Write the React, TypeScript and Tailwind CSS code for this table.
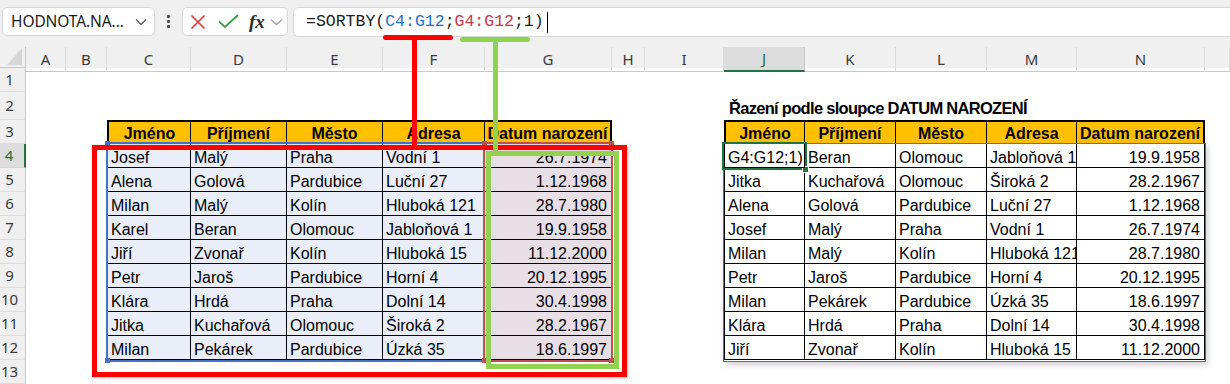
import React from "react";

const SHEET_COLS =
  "grid grid-cols-[40px_41px_84px_96px_96px_102px_127px_33px_79px_81px_91px_91px_90px_128px_1fr]";

const letters = ["A", "B", "C", "D", "E", "F", "G", "H", "I", "J", "K", "L", "M", "N", ""];

const heads = ["Jméno", "Příjmení", "Město", "Adresa", "Datum narození"];

const leftRows = [
  ["Josef", "Malý", "Praha", "Vodní 1", "26.7.1974"],
  ["Alena", "Golová", "Pardubice", "Luční 27", "1.12.1968"],
  ["Milan", "Malý", "Kolín", "Hluboká 121", "28.7.1980"],
  ["Karel", "Beran", "Olomouc", "Jabloňová 1", "19.9.1958"],
  ["Jiří", "Zvonař", "Kolín", "Hluboká 15", "11.12.2000"],
  ["Petr", "Jaroš", "Pardubice", "Horní 4", "20.12.1995"],
  ["Klára", "Hrdá", "Praha", "Dolní 14", "30.4.1998"],
  ["Jitka", "Kuchařová", "Olomouc", "Široká 2", "28.2.1967"],
  ["Milan", "Pekárek", "Pardubice", "Úzká 35", "18.6.1997"],
];

const rightRows = [
  ["G4:G12;1)", "Beran", "Olomouc", "Jabloňová 1", "19.9.1958"],
  ["Jitka", "Kuchařová", "Olomouc", "Široká 2", "28.2.1967"],
  ["Alena", "Golová", "Pardubice", "Luční 27", "1.12.1968"],
  ["Josef", "Malý", "Praha", "Vodní 1", "26.7.1974"],
  ["Milan", "Malý", "Kolín", "Hluboká 121", "28.7.1980"],
  ["Petr", "Jaroš", "Pardubice", "Horní 4", "20.12.1995"],
  ["Milan", "Pekárek", "Pardubice", "Úzká 35", "18.6.1997"],
  ["Klára", "Hrdá", "Praha", "Dolní 14", "30.4.1998"],
  ["Jiří", "Zvonař", "Kolín", "Hluboká 15", "11.12.2000"],
];

const rowHeaders = [
  { n: 1, h: "h-[24px]" },
  { n: 2, h: "h-[28px]" },
  { n: 3, h: "h-[24px]" },
  { n: 4, h: "h-[24px]" },
  { n: 5, h: "h-[24px]" },
  { n: 6, h: "h-[24px]" },
  { n: 7, h: "h-[24px]" },
  { n: 8, h: "h-[24px]" },
  { n: 9, h: "h-[24px]" },
  { n: 10, h: "h-[24px]" },
  { n: 11, h: "h-[24px]" },
  { n: 12, h: "h-[24px]" },
  { n: 13, h: "h-[24px]" },
];

function HeadRow() {
  return (
    <>
      {heads.map((t, i) => (
        <div
          key={t}
          className={
            "flex items-end justify-center overflow-hidden whitespace-nowrap bg-[#ffc000] font-bold text-[16px] leading-[18px] text-black border-t-2 border-b border-black " +
            (i === 0 ? "border-l-2 " : "") +
            (i === 4 ? "border-r-2" : "border-r")
          }
        >
          {t}
        </div>
      ))}
    </>
  );
}

function DataCell({
  text,
  col,
  bg,
  overflow,
}: {
  text: string;
  col: number;
  bg: string;
  overflow?: boolean;
}) {
  const isDate = col === 4;
  return (
    <div
      className={
        "flex items-end whitespace-nowrap text-[16px] leading-[18px] text-black border-r border-b border-black " +
        (overflow ? "overflow-visible relative z-10 " : "overflow-hidden ") +
        (col === 0 ? "border-l " : "") +
        (isDate ? "justify-end pr-[4px] " : "pl-[3px] ") +
        bg
      }
    >
      {text}
    </div>
  );
}

function Toolbar() {
  return (
    <div className="flex items-start h-[47px] bg-[#f0f0f0] pt-[7px] font-['Noto_Sans','Open_Sans',sans-serif]">
      <div className="ml-[2px] w-[153px] h-[29px] rounded-[5px] border border-[#d6d6d6] bg-white flex items-center pl-[8px] pr-[6px]">
        <span className="flex-1 text-[15.5px] text-[#1b1b1b] tracking-[-0.1px]">HODNOTA.NA...</span>
        <svg width="12" height="8" viewBox="0 0 12 8" className="mr-[1px]">
          <path d="M1 1.5 L6 6.5 L11 1.5" fill="none" stroke="#5a5a5a" strokeWidth="1.3" />
        </svg>
      </div>
      <div className="w-[27px] h-[29px] flex flex-col items-center justify-center gap-[2px]">
        <div className="w-[3px] h-[3px] bg-[#4a4a4a] rounded-[1px]" />
        <div className="w-[3px] h-[3px] bg-[#4a4a4a] rounded-[1px]" />
        <div className="w-[3px] h-[3px] bg-[#4a4a4a] rounded-[1px]" />
      </div>
      <div className="w-[106px] h-[29px] rounded-[5px] border border-[#d6d6d6] bg-white flex items-center pl-[6px]">
        <svg width="16" height="16" viewBox="0 0 16 16" className="ml-[1px]">
          <path d="M1.5 1.5 L14.5 14.5 M14.5 1.5 L1.5 14.5" stroke="#e5383d" strokeWidth="1.7" />
        </svg>
        <svg width="21" height="15" viewBox="0 0 21 15" className="ml-[12px]">
          <path d="M1 7.5 L7 13 L20 1" fill="none" stroke="#3b9c47" strokeWidth="1.8" />
        </svg>
        <span className="ml-[10px] font-['Liberation_Serif',serif] italic font-bold text-[19px] leading-none text-[#2b2b2b]">
          fx
        </span>
        <svg width="13" height="8" viewBox="0 0 13 8" className="ml-[5px]">
          <path d="M1 1.5 L6.5 6.5 L12 1.5" fill="none" stroke="#a3a3a3" strokeWidth="1.3" />
        </svg>
      </div>
      <div className="ml-[5px] flex-1 -mr-[8px] h-[30px] rounded-[5px] border border-[#d6d6d6] bg-white flex items-center pl-[12px]">
        <span className="font-['Liberation_Mono',monospace] text-[16.5px] text-[#1b1b1b] whitespace-pre">
          =SORTBY(<span className="text-[#1f6fc4]">C4:G12</span>;<span className="text-[#c23a4a]">G4:G12</span>;1)
        </span>
        <span className="ml-[3px] w-px h-[21px] bg-black" />
      </div>
    </div>
  );
}

function ColumnHeaders() {
  return (
    <div className="flex h-[21px] bg-[#f0f0f0] font-['Noto_Sans','Open_Sans',sans-serif]">
      <div className="w-[26px] h-full border-r border-b border-[#c8c8c8]">
        <svg width="25" height="20" viewBox="0 0 25 20">
          <polygon points="22,1 22,18 7,18" fill="#d6d6d6" />
        </svg>
      </div>
      <div className={SHEET_COLS + " flex-1"}>
        {letters.map((l, i) =>
          l === "J" ? (
            <div
              key={i}
              className="flex items-center justify-center text-[15px] text-[#217346] bg-[#dcdcdc] border-r border-[#c8c8c8] border-b-2 border-b-[#217346]"
            >
              {l}
            </div>
          ) : (
            <div
              key={i}
              className="flex items-center justify-center text-[15px] text-[#3a3a3a] border-r border-[#dcdcdc] border-b border-b-[#c8c8c8]"
            >
              {l}
            </div>
          )
        )}
      </div>
    </div>
  );
}

export default function App() {
  return (
    <div className="relative w-[1230px] h-[384px] overflow-hidden bg-white font-['Liberation_Sans',Arial,sans-serif]">
      <Toolbar />
      <ColumnHeaders />
      <div className="flex">
        <div className="flex flex-col w-[26px] bg-[#f0f0f0] font-['Noto_Sans','Open_Sans',sans-serif]">
          {rowHeaders.map((r) =>
            r.n === 4 ? (
              <div
                key={r.n}
                className={
                  r.h +
                  " flex items-center justify-center pr-[6px] text-[15px] text-[#217346] bg-[#dcdcdc] border-b border-[#d6d6d6] border-r-2 border-r-[#217346]"
                }
              >
                {r.n}
              </div>
            ) : (
              <div
                key={r.n}
                className={
                  r.h +
                  " flex items-center justify-center pr-[6px] text-[15px] text-[#3a3a3a] border-b border-[#dcdcdc] border-r border-r-[#c8c8c8]"
                }
              >
                {r.n}
              </div>
            )
          )}
        </div>
        <div
          className={
            SHEET_COLS +
            " flex-1 grid-rows-[24px_28px_24px_24px_24px_24px_24px_24px_24px_24px_24px_24px_24px]"
          }
        >
          {/* title */}
          <div className="col-start-10 col-end-16 row-start-2 flex items-end pl-[5px] pb-[3px] whitespace-nowrap font-bold text-[16.5px] leading-[18px] tracking-[-0.7px] text-black">
            Řazení podle sloupce DATUM NAROZENÍ
          </div>

          {/* left table */}
          <div className="col-start-3 col-end-8 row-start-3 row-end-13 grid grid-cols-[84px_96px_96px_102px_127px] grid-rows-[24px_24px_24px_24px_24px_24px_24px_24px_24px_24px]">
            <HeadRow />
            {leftRows.map((row, r) =>
              row.map((c, i) => (
                <DataCell
                  key={r + "-" + i}
                  text={c}
                  col={i}
                  bg={i === 4 ? "bg-[#e8dfe6]" : "bg-[#e9eef8]"}
                />
              ))
            )}
          </div>

          {/* right table */}
          <div className="col-start-10 col-end-15 row-start-3 row-end-13 grid grid-cols-[81px_91px_91px_90px_128px] grid-rows-[24px_24px_24px_24px_24px_24px_24px_24px_24px_24px]">
            <HeadRow />
            {rightRows.map((row, r) =>
              row.map((c, i) => (
                <DataCell
                  key={r + "-" + i}
                  text={c}
                  col={i}
                  bg="bg-white"
                  overflow={r === 0 && i === 0}
                />
              ))
            )}
          </div>
        </div>
      </div>

      {/* reference highlight C4:G12 */}
      <div className="absolute left-[106px] top-[142px] w-[507px] h-[220px] border-2 border-[#4472c4]" />
      <div className="absolute left-[105px] top-[141px] w-[5px] h-[5px] bg-[#4472c4]" />
      <div className="absolute left-[105px] top-[358px] w-[5px] h-[5px] bg-[#4472c4]" />
      {/* reference highlight G4:G12 */}
      <div className="absolute left-[483px] top-[142px] w-[130px] h-[220px] border-2 border-[#c0504d]" />
      <div className="absolute left-[482px] top-[141px] w-[5px] h-[5px] bg-[#c0504d]" />
      <div className="absolute left-[609px] top-[141px] w-[5px] h-[5px] bg-[#c0504d]" />
      <div className="absolute left-[482px] top-[358px] w-[5px] h-[5px] bg-[#c0504d]" />
      <div className="absolute left-[609px] top-[358px] w-[5px] h-[5px] bg-[#c0504d]" />

      {/* spill range border */}
      <div className="absolute left-[723px] top-[143px] w-[483px] h-[219px] border border-[#4472c4] shadow-[2px_3px_6px_rgba(0,0,0,0.18)]" />
      {/* active cell J4 */}
      <div className="absolute left-[722px] top-[142px] w-[85px] h-[28px] border-2 border-[#217346]" />
      <div className="absolute left-[802px] top-[166px] w-[7px] h-[7px] bg-[#217346] border border-white" />

      {/* annotations */}
      <div className="absolute left-[92px] top-[145px] w-[535px] h-[232px] border-[5px] border-[#ff0000] shadow-[1px_1px_3px_rgba(0,0,0,0.25)]" />
      <div className="absolute left-[383px] top-[35px] w-[70px] h-[5px] rounded-full bg-[#ff0000]" />
      <div className="absolute left-[412px] top-[36px] w-[5px] h-[111px] bg-[#ff0000]" />

      <div className="absolute left-[486px] top-[151px] w-[133px] h-[218px] border-[5px] border-[#92d050]" />
      <div className="absolute left-[460px] top-[37px] w-[70px] h-[5px] rounded-full bg-[#92d050]" />
      <div className="absolute left-[493px] top-[38px] w-[5px] h-[115px] bg-[#92d050]" />
    </div>
  );
}
